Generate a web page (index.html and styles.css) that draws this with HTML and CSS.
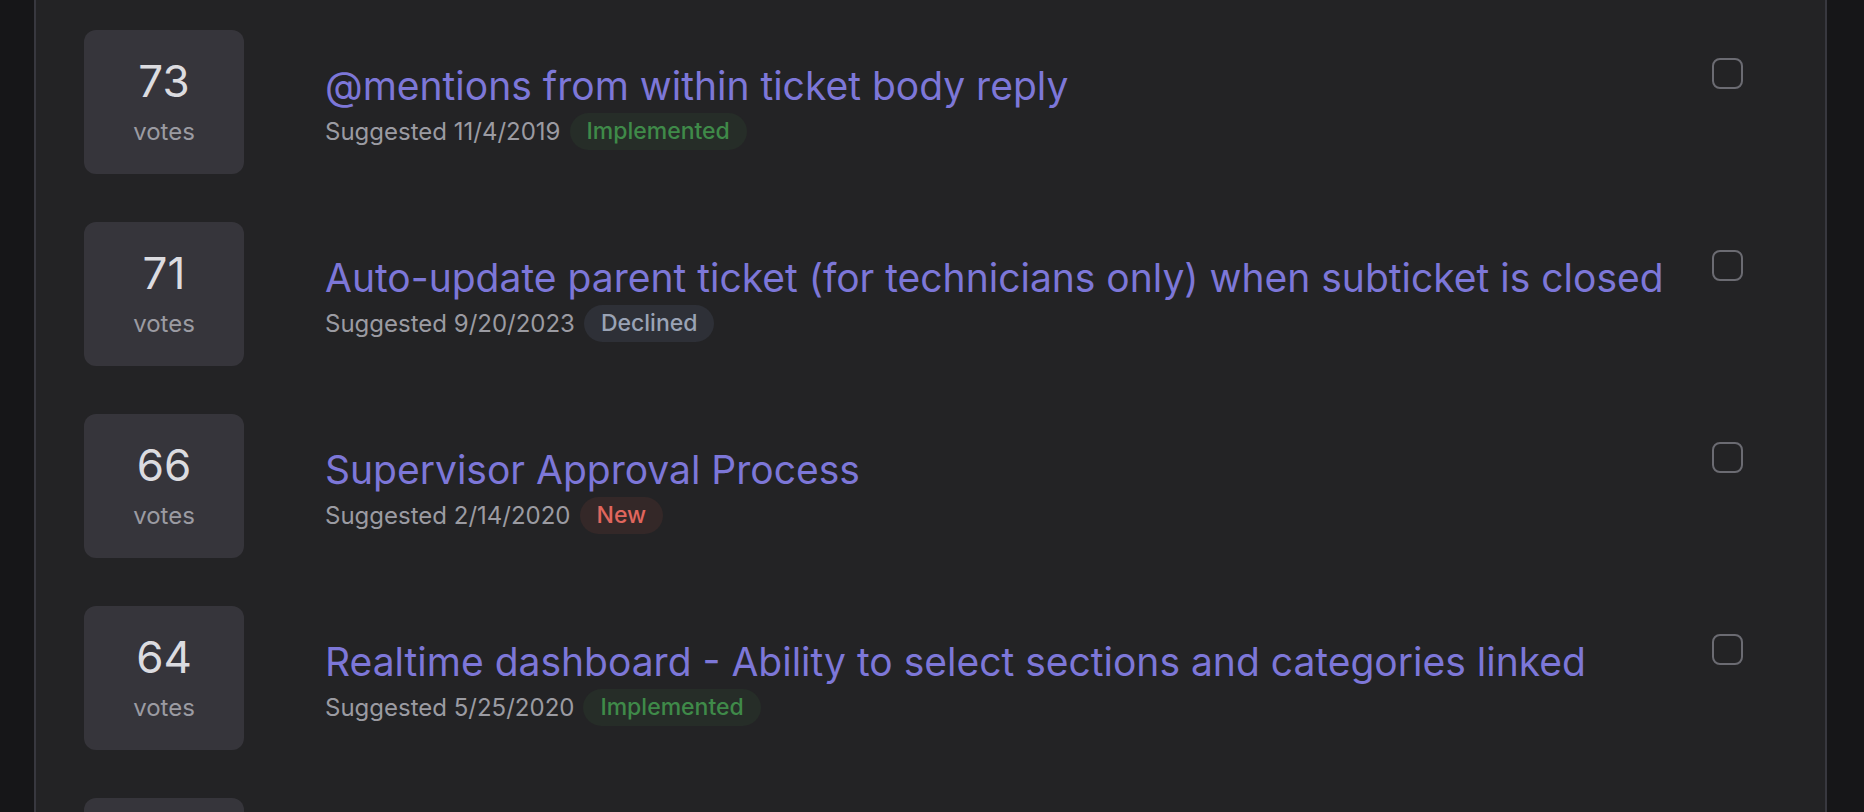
FILE: index.html
```html
<!DOCTYPE html>
<html lang="en">
<head>
    <meta charset="UTF-8">
    <meta name="viewport" content="width=device-width, initial-scale=1.0">
    <title>Suggestions</title>
    <link rel="stylesheet" href="styles.css">
</head>
<body>
    <div class="board">
        <ul class="ideas">
            <li class="idea">
                <div class="votes"><span class="count">73</span><span class="label">votes</span></div>
                <div class="idea-body">
                    <a class="idea-title" href="#">@mentions from within ticket body reply</a>
                    <div class="idea-meta">
                        <span>Suggested 11/4/2019</span>
                        <span class="status implemented">Implemented</span>
                    </div>
                </div>
                <span class="check"></span>
            </li>
            <li class="idea">
                <div class="votes"><span class="count">71</span><span class="label">votes</span></div>
                <div class="idea-body">
                    <a class="idea-title" href="#">Auto-update parent ticket (for technicians only) when subticket is closed</a>
                    <div class="idea-meta">
                        <span>Suggested 9/20/2023</span>
                        <span class="status declined">Declined</span>
                    </div>
                </div>
                <span class="check"></span>
            </li>
            <li class="idea">
                <div class="votes"><span class="count">66</span><span class="label">votes</span></div>
                <div class="idea-body">
                    <a class="idea-title" href="#">Supervisor Approval Process</a>
                    <div class="idea-meta">
                        <span>Suggested 2/14/2020</span>
                        <span class="status new">New</span>
                    </div>
                </div>
                <span class="check"></span>
            </li>
            <li class="idea">
                <div class="votes"><span class="count">64</span><span class="label">votes</span></div>
                <div class="idea-body">
                    <a class="idea-title" href="#">Realtime dashboard - Ability to select sections and categories linked</a>
                    <div class="idea-meta">
                        <span>Suggested 5/25/2020</span>
                        <span class="status implemented">Implemented</span>
                    </div>
                </div>
                <span class="check"></span>
            </li>
            <li class="idea">
                <div class="votes"></div>
                <div class="idea-body"></div>
                <span class="check"></span>
            </li>
        </ul>
    </div>
</body>
</html>
```

FILE: styles.css
```css
body {
    font-family: Inter, "Noto Sans", sans-serif;
    background-color: #161618;
    margin: 0;
    height: 812px;
    overflow: hidden;
}
.board {
    margin: 0 37px 0 34px;
    background: #232325;
    border-left: 2px solid #38383f;
    border-right: 2px solid #38383f;
    min-height: 1200px;
}
.ideas {
    list-style: none;
    margin: 0;
    padding: 30px 0 0 0;
    display: flex;
    flex-direction: column;
    gap: 48px;
}
.idea {
    display: flex;
    align-items: center;
    padding: 0 82px 0 48px;
}
.votes {
    width: 160px;
    height: 144px;
    flex-shrink: 0;
    background: #36353b;
    border-radius: 12px;
    display: flex;
    flex-direction: column;
    align-items: center;
    justify-content: center;
}
.count {
    font-size: 44px;
    line-height: 52px;
    color: #dcdce0;
}
.label {
    font-size: 24px;
    line-height: 34px;
    margin-top: 8px;
    color: #9b9ba2;
}
.idea-body {
    flex-grow: 1;
    margin: 8px 0 0 81px;
    display: flex;
    flex-direction: column;
    gap: 4px;
}
.idea-title {
    font-size: 39px;
    line-height: 46px;
    color: #7d77d8;
    text-decoration: none;
}
.idea-meta {
    display: flex;
    align-items: center;
    gap: 9px;
    font-size: 24px;
    color: #9b9ba2;
}
.status {
    font-size: 23px;
    font-weight: 500;
    line-height: 37px;
    padding: 0 17px;
    border-radius: 19px;
}
.implemented { background: #262d28; color: #3f8a49; }
.declined { background: #2e3037; color: #9aa3b5; }
.new { background: #342828; color: #e0665d; }
.check {
    width: 27px;
    height: 27px;
    border: 2px solid #6b6b72;
    border-radius: 8px;
    align-self: flex-start;
    margin-top: 28px;
    flex-shrink: 0;
}
```
